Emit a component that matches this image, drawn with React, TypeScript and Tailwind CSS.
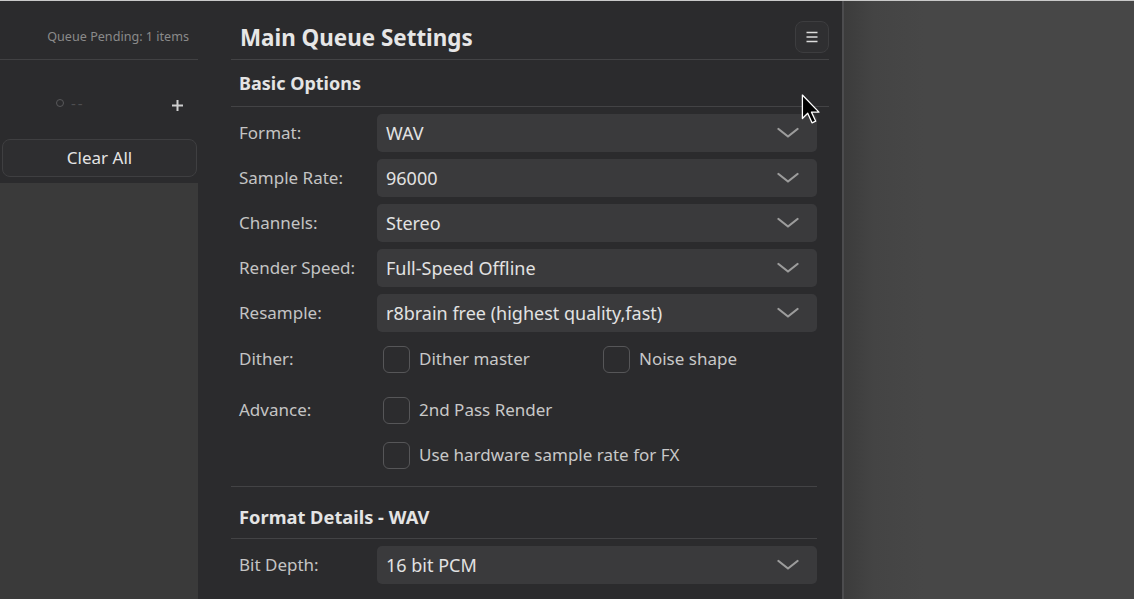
import React from "react";

const font = { fontFamily: '"Noto Sans", "Open Sans", sans-serif' };

function Chevron() {
  return (
    <svg width="22" height="12" viewBox="0 0 22 12" className="shrink-0">
      <path d="M1.5 2 L11 9.5 L20.5 2" fill="none" stroke="#9c9c9c" strokeWidth="2.2" strokeLinecap="round" strokeLinejoin="round" />
    </svg>
  );
}

function Select({ value }: { value: string }) {
  return (
    <div className="flex-1 h-[38px] rounded-[5px] bg-[#3a3a3c] flex items-center pl-[9px] pr-[18px] text-[18px] text-[#e2e2e2]">
      <span className="flex-1">{value}</span>
      <Chevron />
    </div>
  );
}

function Row({ label, value }: { label: string; value: string }) {
  return (
    <div className="flex items-center">
      <div className="w-[146px] pl-[8px] text-[17px] text-[#c4c4c4]">{label}</div>
      <Select value={value} />
    </div>
  );
}

function Check({ label }: { label: string }) {
  return (
    <div className="flex items-center">
      <div className="w-[27px] h-[27px] rounded-[6px] border-[1.5px] border-[#565658] bg-[#2c2c2e]" />
      <span className="ml-[9px] text-[17px] text-[#c8c8c8]">{label}</span>
    </div>
  );
}

export default function App() {
  return (
    <div className="w-[1134px] h-[599px] overflow-hidden relative border-t border-[#c9c9c9] flex bg-[#464646]" style={font}>
      {/* Left panel */}
      <div className="w-[198px] flex flex-col bg-[#2b2b2d]">
        <div className="h-[59px] flex items-center justify-end pr-[9px] pt-[14px] text-[12.6px] text-[#8a8a8a] border-b border-[#414143]">
          Queue Pending: 1 items
        </div>
        <div className="h-[79px] flex items-center pl-[56px] pr-[14px] pt-[6px]">
          <div className="flex items-center gap-[7px] text-[#4e4e50]">
            <div className="w-[8px] h-[8px] rounded-full border border-[#58585a]" />
            <span className="text-[15px] tracking-[2px] mt-[2px]">--</span>
          </div>
          <div className="flex-1" />
          <svg width="13" height="13" viewBox="0 0 13 13" className="mt-[6px]">
            <path d="M6.5 1 V12 M1 6.5 H12" stroke="#cfcfcf" strokeWidth="2" />
          </svg>
        </div>
        <div className="pl-[2px] pr-[1px]">
          <div className="h-[38px] rounded-[8px] border border-[#3f3f41] bg-[#2e2e30] flex items-center justify-center text-[17px] text-[#e4e4e4]">
            Clear All
          </div>
        </div>
        <div className="mt-[6px] flex-1 bg-[#3a3a3a]" />
      </div>

      {/* Main settings */}
      <div className="w-[644px] bg-[#2b2b2d] pl-[33px] pr-[13px] flex flex-col">
        <div className="h-[59px] flex items-center justify-between border-b border-[#434345]">
          <div className="pl-[9px] text-[22.4px] font-bold text-[#e6e6e6] pt-[16px]">Main Queue Settings</div>
          <div className="w-[34px] h-[32px] mt-[14px] rounded-[8px] border border-[#3d3d3f] bg-[#2f2f31] flex items-center justify-center">
            <svg width="12" height="12" viewBox="0 0 12 12">
              <path d="M0.5 1.5 H11.5 M0.5 6 H11.5 M0.5 10.5 H11.5" stroke="#dcdcdc" strokeWidth="1.3" />
            </svg>
          </div>
        </div>
        <div className="h-[47px] flex items-center pl-[8px] pt-[1px] border-b border-[#434345] text-[18px] font-bold text-[#e4e4e4]">
          Basic Options
        </div>
        <div className="pr-[12px] pt-[7px] flex flex-col gap-[7px]">
          <Row label="Format:" value="WAV" />
          <Row label="Sample Rate:" value="96000" />
          <Row label="Channels:" value="Stereo" />
          <Row label="Render Speed:" value="Full-Speed Offline" />
          <Row label="Resample:" value="r8brain free (highest quality,fast)" />
        </div>
        <div className="pr-[12px] flex flex-col">
          <div className="h-[40px] mt-[7px] flex items-center">
            <div className="w-[152px] pl-[8px] text-[17px] text-[#c4c4c4]">Dither:</div>
            <div className="w-[220px]"><Check label="Dither master" /></div>
            <Check label="Noise shape" />
          </div>
          <div className="h-[40px] mt-[11px] flex items-center">
            <div className="w-[152px] pl-[8px] text-[17px] text-[#c4c4c4]">Advance:</div>
            <Check label="2nd Pass Render" />
          </div>
          <div className="h-[40px] mt-[5px] flex items-center">
            <div className="w-[152px]" />
            <Check label="Use hardware sample rate for FX" />
          </div>
          <div className="mt-[11px] border-t border-[#434345]" />
          <div className="h-[52px] pt-[8px] flex items-center pl-[8px] border-b border-[#434345] text-[18.3px] font-bold text-[#e4e4e4]">
            Format Details - WAV
          </div>
          <div className="pt-[7px]">
            <Row label="Bit Depth:" value="16 bit PCM" />
          </div>
        </div>
      </div>

      {/* Separator */}
      <div className="w-[2px] bg-[#4c4c4e]" />

      {/* Right area */}
      <div className="flex-1 bg-[linear-gradient(to_right,#3c3c3c,#444444_30px,#474747_80px)]" />

      {/* Mouse cursor */}
      <svg className="absolute left-[801px] top-[93px]" width="22" height="32" viewBox="0 0 20 30">
        <path d="M1 1 L1 23 L6 18 L10 27 L13.5 25.5 L9.5 17 L16.5 17 Z" fill="#000" stroke="#fff" strokeWidth="1.2" strokeLinejoin="round" />
      </svg>
    </div>
  );
}
